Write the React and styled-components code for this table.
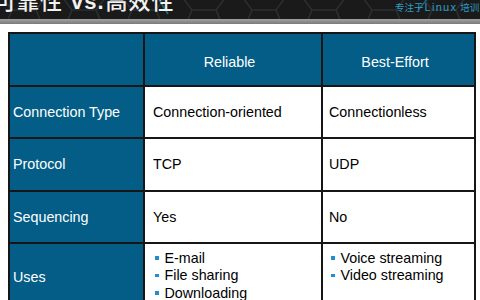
import React from 'react'
import styled, { createGlobalStyle } from 'styled-components'

const GlobalStyle = createGlobalStyle`
  html, body {
    margin: 0;
    padding: 0;
    background: #ffffff;
  }
  body {
    font-family: "Liberation Sans", Arial, sans-serif;
    width: 480px;
    height: 300px;
    overflow: hidden;
  }
`

const Slide = styled.div`
  width: 480px;
  height: 300px;
  overflow: hidden;
  display: flex;
  flex-direction: column;
`

const TitleBar = styled.header`
  position: relative;
  height: 19px;
  background: #1a1a1a;
  display: flex;
  align-items: flex-start;
  overflow: hidden;
  flex-shrink: 0;
`

const HexBackdrop = styled.svg`
  position: absolute;
  inset: 0;
  width: 100%;
  height: 100%;
`

const Title = styled.h1`
  position: relative;
  margin: -12px 0 0 -6px;
  font-family: "Noto Sans CJK SC", "Liberation Sans", sans-serif;
  font-size: 22px;
  line-height: 22px;
  font-weight: 500;
  color: #f2f2f2;
  white-space: nowrap;
  letter-spacing: 1px;
`

const Latin = styled.span`
  font-family: "Liberation Sans", Arial, sans-serif;
  font-weight: 700;
  margin: 0 1px 0 8px;
`

const Tagline = styled.div`
  position: relative;
  margin: 1px 0 0 auto;
  width: 85px;
  overflow: hidden;
  white-space: nowrap;
  font-family: "Noto Sans CJK SC", sans-serif;
  font-size: 9.5px;
  line-height: 12px;
  color: #2f9cc6;
`

const TagLatin = styled.span`
  font-family: "Liberation Sans", Arial, sans-serif;
  font-size: 11px;
  letter-spacing: 1.3px;
  margin: 0 3px 0 1px;
`

const Rule = styled.div`
  height: 5px;
  background: linear-gradient(to bottom, #a0a0a0, #7a7a7a);
  flex-shrink: 0;
`

const Content = styled.main`
  padding: 8px 0 0 8px;
`

const Grid = styled.div`
  display: grid;
  grid-template-columns: 133px 176px 151px;
  grid-template-rows: 50.5px 50.5px 50.5px 50.5px 66px;
  gap: 2px;
  padding: 2px;
  width: fit-content;
  background: #161616;
`

const Cell = styled.div`
  display: flex;
  align-items: center;
  font-size: 14.3px;
  background: ${p => (p.$head ? '#035d86' : '#ffffff')};
  color: ${p => (p.$head ? '#ffffff' : '#000000')};
  padding-left: ${p => p.$pad ?? 7}px;
  justify-content: ${p => (p.$center ? 'center' : 'flex-start')};
  padding-right: ${p => (p.$center ? 14 : 0)}px;
  padding-top: ${p => (p.$center ? 6 : 0)}px;
`

const ListCell = styled(Cell)`
  align-items: flex-start;
  padding-top: 5px;
`

const List = styled.ul`
  list-style: none;
  margin: 0;
  padding: 0;
`

const Item = styled.li`
  display: flex;
  align-items: center;
  height: 17.5px;
  gap: 6px;
  margin-left: ${p => p.$indent}px;
  &::before {
    content: '';
    width: 3.5px;
    height: 3.5px;
    background: #1f8fd0;
  }
`

const rows = [
  ['Connection Type', 'Connection-oriented', 'Connectionless'],
  ['Protocol', 'TCP', 'UDP'],
  ['Sequencing', 'Yes', 'No'],
]

function Hexes() {
  const hexes = []
  for (let i = -1; i < 9; i++) {
    const x = i * 60
    hexes.push(
      <path
        key={i}
        d={`M${x} -6 L${x + 12} 10 L${x + 36} 10 L${x + 48} -6 M${x + 12} 10 L${x + 6} 24 M${x + 36} 10 L${x + 42} 24`}
        fill="none"
        stroke="#2b2f31"
        strokeWidth="1.5"
      />
    )
  }
  return (
    <HexBackdrop viewBox="0 0 480 19" preserveAspectRatio="none">
      {hexes}
      <path d="M158 -2 L168 14" stroke="#1d6f8e" strokeWidth="1.5" fill="none" />
      <path d="M418 10 L430 -4" stroke="#1d6f8e" strokeWidth="1.2" fill="none" />
    </HexBackdrop>
  )
}

export default function App() {
  return (
    <Slide>
      <GlobalStyle />
      <TitleBar>
        <Hexes />
        <Title>
          可靠性<Latin>vs.</Latin>高效性
        </Title>
        <Tagline>专注于<TagLatin>Linux</TagLatin>培训</Tagline>
      </TitleBar>
      <Rule />
      <Content>
        <Grid>
          <Cell $head />
          <Cell $head $center>Reliable</Cell>
          <Cell $head $center>Best-Effort</Cell>
          {rows.map(r => (
            <React.Fragment key={r[0]}>
              <Cell $head $pad={3}>{r[0]}</Cell>
              <Cell $pad={8}>{r[1]}</Cell>
              <Cell $pad={6}>{r[2]}</Cell>
            </React.Fragment>
          ))}
          <Cell $head $pad={3}>Uses</Cell>
          <ListCell $pad={0}>
            <List>
              <Item $indent={10}>E-mail</Item>
              <Item $indent={10}>File sharing</Item>
              <Item $indent={10}>Downloading</Item>
            </List>
          </ListCell>
          <ListCell $pad={0}>
            <List>
              <Item $indent={8}>Voice streaming</Item>
              <Item $indent={8}>Video streaming</Item>
            </List>
          </ListCell>
        </Grid>
      </Content>
    </Slide>
  )
}
